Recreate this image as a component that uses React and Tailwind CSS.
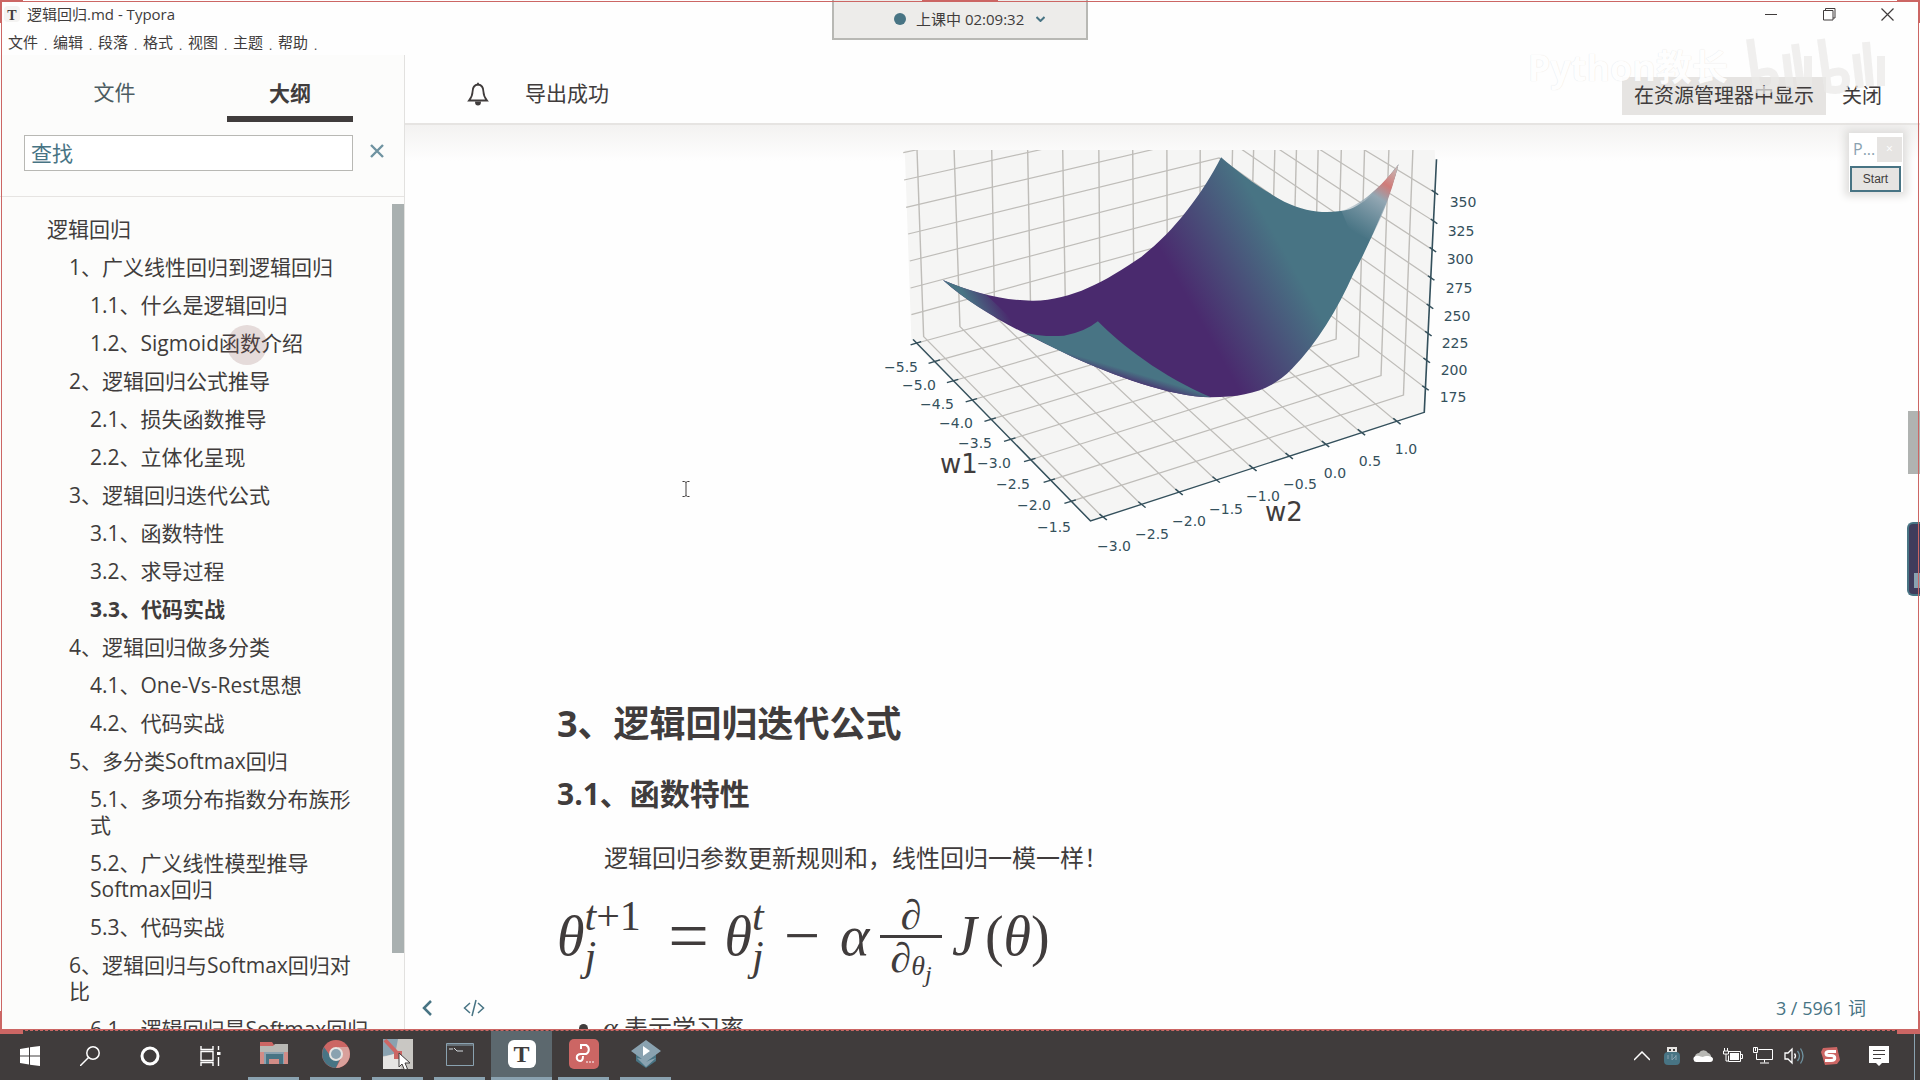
import React from "react";

const outline = [
  { level: 1, text: "逻辑回归" },
  { level: 2, text: "1、广义线性回归到逻辑回归" },
  { level: 3, text: "1.1、什么是逻辑回归" },
  { level: 3, text: "1.2、Sigmoid函数介绍", marker: true },
  { level: 2, text: "2、逻辑回归公式推导" },
  { level: 3, text: "2.1、损失函数推导" },
  { level: 3, text: "2.2、立体化呈现" },
  { level: 2, text: "3、逻辑回归迭代公式" },
  { level: 3, text: "3.1、函数特性" },
  { level: 3, text: "3.2、求导过程" },
  { level: 3, text: "3.3、代码实战", active: true },
  { level: 2, text: "4、逻辑回归做多分类" },
  { level: 3, text: "4.1、One-Vs-Rest思想" },
  { level: 3, text: "4.2、代码实战" },
  { level: 2, text: "5、多分类Softmax回归" },
  { level: 3, text: "5.1、多项分布指数分布族形式" },
  { level: 3, text: "5.2、广义线性模型推导Softmax回归" },
  { level: 3, text: "5.3、代码实战" },
  { level: 2, text: "6、逻辑回归与Softmax回归对比" },
  { level: 3, text: "6.1、逻辑回归是Softmax回归" },
];

const indent = { 1: "pl-[47px]", 2: "pl-[69px]", 3: "pl-[90px]" };

function TitleBar() {
  return (
    <header className="flex h-7 shrink-0 items-center pl-1">
      <span className="grid size-4 place-items-center rounded bg-[#f4f3f2] font-['Liberation_Serif',serif] text-sm font-bold">T</span>
      <h1 className="ml-[7px] text-[15px] leading-5">逻辑回归.md - Typora</h1>
      <div className="ml-auto flex items-center">
        <button aria-label="最小化" className="grid h-7 w-[58px] place-items-center">
          <svg width="12" height="12" stroke="#403c3c"><path d="M0 6.5h12" /></svg>
        </button>
        <button aria-label="还原" className="grid h-7 w-[58px] place-items-center">
          <svg width="13" height="13" fill="none" stroke="#403c3c"><path d="M.5 2.500h9.500v9.500h-9.500zM2.500 2.500v-2h9.500v9.500h-2" /></svg>
        </button>
        <button aria-label="关闭窗口" className="mr-1 grid h-7 w-[58px] place-items-center">
          <svg width="13" height="13" stroke="#403c3c" strokeWidth="1.2"><path d="M.5.5l12 12M12.500.5l-12 12" /></svg>
        </button>
      </div>
    </header>
  );
}

function MenuBar() {
  return (
    <nav className="flex h-[27px] shrink-0 pt-0.5 pl-2">
      {["文件", "编辑", "段落", "格式", "视图", "主题", "帮助"].map((m) => (
        <button key={m} className="flex w-[45px] items-start whitespace-nowrap text-left text-[15px] leading-6">
          {m}
          <span className="ml-1.5 pt-1 text-xs leading-6">.</span>
        </button>
      ))}
    </nav>
  );
}

function Sidebar() {
  return (
    <aside className="flex w-[405px] shrink-0 flex-col border-r border-[#e2e1df] bg-[#fcfcfb]">
      <div className="flex h-[67px] shrink-0 items-end pr-[51px] pl-[2px] text-[21px]">
        <button className="h-[49px] w-[225px] pb-3 text-center leading-8 text-[#4c5c62]">文件</button>
        <button className="h-[49px] flex-1 border-b-[6px] border-[#403c3c] pb-1 text-center font-bold leading-8">大纲</button>
      </div>
      <div className="mt-[13px] flex h-[62px] shrink-0 items-start border-b border-[#e6e4e2] pl-6">
        <input
          aria-label="查找"
          placeholder="查找"
          className="h-9 w-[329px] border border-[#b8b8b4] bg-white px-1.5 text-[21px] outline-none placeholder:text-[#487484]"
        />
        <button aria-label="清除" className="ml-4 mt-2 grid size-4 place-items-center">
          <svg width="14" height="14" stroke="#6f93a1" strokeWidth="2.4"><path d="M1 1l12 12M13 1L1 13" /></svg>
        </button>
      </div>
      <div className="flex min-h-0 flex-1 pt-[7px]">
        <ul className="min-w-0 flex-1 overflow-hidden pt-1.5">
          {outline.map((o) => (
            <li key={o.text} className={`py-1.5 pr-[22px] text-[21px] leading-[26px] ${indent[o.level]}`}>
              <a href="#outline" className={o.active ? "relative font-bold" : "relative"}>
                {o.text}
                {o.marker && <span className="absolute -top-1 right-9 size-10 rounded-full bg-[#8a5a5a]/20" />}
              </a>
            </li>
          ))}
        </ul>
        <div className="h-[749px] w-3 bg-[#a9b0b0]" />
      </div>
    </aside>
  );
}

const labels = [
  ["350", 603, 72], ["325", 601, 101], ["300", 600, 129], ["275", 599, 158], ["250", 597, 186],
  ["225", 595, 213], ["200", 594, 240], ["175", 593, 267],
  ["−5.5", 41, 237], ["−5.0", 59, 255], ["−4.5", 77, 274], ["−4.0", 96, 293], ["−3.5", 115, 313],
  ["−3.0", 134, 333], ["−2.5", 153, 354], ["−2.0", 174, 375], ["−1.5", 194, 397],
  ["−3.0", 254, 416], ["−2.5", 292, 404], ["−2.0", 329, 391], ["−1.5", 366, 379], ["−1.0", 403, 366],
  ["−0.5", 440, 354], ["0.0", 475, 343], ["0.5", 510, 331], ["1.0", 546, 319],
];

function SurfacePlot() {
  return (
    <svg viewBox="-17 1 640 440" className="mx-auto block h-[440px] w-[640px] overflow-visible" role="img" aria-label="损失函数曲面">
      <defs>
        <clipPath id="crop"><rect x="0" y="60" width="1568" height="1260" /></clipPath>
        <linearGradient id="bowl" gradientUnits="userSpaceOnUse" x1="800" y1="500" x2="1050" y2="385">
          <stop offset="0" stopColor="#4a2a6e" />
          <stop offset="1" stopColor="#487484" />
        </linearGradient>
        <linearGradient id="tip" gradientUnits="userSpaceOnUse" x1="1190" y1="290" x2="1320" y2="120">
          <stop offset="0" stopColor="#8aa2b0" stopOpacity="0" />
          <stop offset=".55" stopColor="#93a7b3" />
          <stop offset=".75" stopColor="#d07b78" />
          <stop offset="1" stopColor="#c8b4b2" />
        </linearGradient>
        <linearGradient id="left" gradientUnits="userSpaceOnUse" x1="270" y1="530" x2="340" y2="500">
          <stop offset="0" stopColor="#487484" />
          <stop offset="1" stopColor="#487484" stopOpacity="0" />
        </linearGradient>
        <linearGradient id="flap" gradientUnits="userSpaceOnUse" x1="640" y1="660" x2="610" y2="742">
          <stop offset=".6" stopColor="#487484" />
          <stop offset="1" stopColor="#4a2a6e" />
        </linearGradient>
      </defs>
      <g transform="scale(.408 .3333)" clipPath="url(#crop)" fill="none">
        <path fill="#f5f5f4" d="M108 0L880 0 880 365 126 630zM880 0L1405 0 1410 88 1383 847 880 365zM126 630L880 365 1383 847 565 1173z" />
        <g stroke="#bfbdb9" strokeWidth="3.500">
          <path d="M138 0L156 620 595 1162M229 0L245 590 690 1125M322 0L330 558 781 1087M410 0L418 527 872 1050M496 0L503 499 962 1015M585 0L588 469 1051 979M668 0L671 440 1140 943M752 0L753 411 1228 908M834 0L833 382 1315 875" />
          <path d="M1357 0L1332 795 515 1115M1298 0L1277 737 464 1052M1238 0L1222 680 416 990M1181 0L1167 627 367 929M1124 0L1113 575 319 869M1071 0L1060 525 273 811M1018 0L1008 476 227 753M966 0L957 428 182 695M914 0L908 380 138 640" />
          <path d="M126 554L880 300 1387 775M124 474L880 228 1390 692M122 393L880 156 1394 612M118 312L880 84 1398 530M113 232L880 12 1401 445M108 150L880-60 1404 360M106 68L880-132 1408 275M880-204L1410 188" />
        </g>
        <g stroke="#34505c" strokeWidth="4">
          <path d="M130 628L565 1173 1383 847 1413 88" />
          <path d="M124 645l26-10M168 700l28-10M213 758l28-10M259 816l28-10M305 874l28-10M353 934l28-10M402 995l28-10M450 1057l28-10M501 1120l28-10" />
          <path d="M587 1152l18 18M682 1115l18 18M773 1077l18 18M864 1040l18 18M954 1005l18 18M1043 969l18 18M1132 933l18 18M1220 898l18 18M1307 865l18 18" />
          <path d="M1401 180l16 14M1399 267l16 14M1396 352l16 14M1392 437l16 14M1389 522l16 14M1385 604l16 14M1381 684l16 14M1378 767l16 14" />
        </g>
        <path
          fill="url(#bowl)"
          d="M203 450C270 485 350 513 425 512C520 510 600 455 690 380C770 305 840 190 885 82C930 130 980 175 1040 215C1100 250 1150 252 1200 238C1250 215 1290 150 1320 103C1300 200 1250 340 1210 430C1170 540 1120 640 1060 715C1010 780 950 802 860 802C760 800 620 735 520 680C400 610 290 545 203 450z"
        />
        <path fill="url(#left)" d="M203 450Q250 475 310 495L400 600Q290 545 203 450z" />
        <path fill="url(#tip)" d="M1180 243C1240 220 1290 150 1320 103C1300 200 1275 275 1250 330L1200 300z" />
        <path fill="url(#flap)" d="M405 608Q450 622 500 617Q550 607 583 574C640 645 740 740 860 802C760 800 620 735 520 680Q450 640 405 608z" />
      </g>
      <g fill="#34505c" textAnchor="middle" fontFamily="DejaVu Sans, sans-serif" fontSize="14">
        {labels.map(([t, x, y], i) => <text key={i} x={x} y={y + 5}>{t}</text>)}
      </g>
      <g fill="#403c3c" textAnchor="middle" fontFamily="DejaVu Sans, sans-serif" fontSize="26">
        <text x="99" y="343">w1</text>
        <text x="424" y="391">w2</text>
      </g>
    </svg>
  );
}

function Formula() {
  return (
    <div className="mt-3 flex h-24 items-center font-['Liberation_Serif',serif] text-[56px] leading-none italic">
      <span>θ</span>
      <span className="flex w-[66px] flex-col text-[42px] leading-10">
        <span className="whitespace-nowrap">t<span className="not-italic">+1</span></span>
        <span>j</span>
      </span>
      <span className="ml-4 w-11 text-center text-[72px] not-italic">=</span>
      <span className="ml-3.5">θ</span>
      <span className="flex w-5 flex-col text-[42px] leading-10">
        <span>t</span>
        <span>j</span>
      </span>
      <span className="ml-3 w-9 text-center text-[64px] not-italic">−</span>
      <span className="ml-5 w-8">α</span>
      <span className="ml-2 flex w-[62px] flex-col pt-2 text-center text-[42px] leading-10">
        <span className="border-b-[3px] border-[#403c3c]">∂</span>
        <span className="flex items-start justify-center whitespace-nowrap">
          ∂<span className="pt-3.5 text-[28px] leading-none">θ</span><span className="pt-6 text-[24px] leading-none">j</span>
        </span>
      </span>
      <span className="ml-2.5 whitespace-nowrap">J<span className="ml-2 not-italic">(</span>θ<span className="not-italic">)</span></span>
    </div>
  );
}

function Editor() {
  return (
    <main className="relative flex min-w-0 flex-1 flex-col overflow-hidden">
      <div className="flex h-[70px] shrink-0 items-center border-b-2 border-[#e6e4e2] pt-2.5 pr-[38px] pl-[62px] text-[21px]">
        <svg width="22" height="24" viewBox="0 0 22 24" fill="none" stroke="#403c3c" strokeWidth="1.800">
          <path d="M11 2.500C6.500 3 5.500 6.500 5.500 10c0 4-1.500 6-3.500 8.500h18c-2-2.500-3.500-4.500-3.500-8.500 0-3.500-1-7-5.500-7.500zM11 .8v2" />
          <path d="M9 20.500a2 2 0 0 0 4 0z" fill="#403c3c" />
        </svg>
        <p className="ml-9">导出成功</p>
        <button className="mt-1 ml-auto h-[38px] bg-[#e6e4e2] px-3 text-[20px]">在资源管理器中显示</button>
        <button className="mt-1 ml-4 text-[20px]">关闭</button>
      </div>
      <div className="min-h-0 flex-1 overflow-hidden bg-[linear-gradient(#f3f2f1,#fefefe_36px)] px-[152px] pt-1.5">
        <SurfacePlot />
        <h2 className="mt-[129px] text-[36px] leading-[48px] font-bold">3、逻辑回归迭代公式</h2>
        <h3 className="mt-[26px] text-[30px] leading-10 font-bold">3.1、函数特性</h3>
        <p className="mt-[26px] pl-[47px] text-[24px] leading-9">逻辑回归参数更新规则和，线性回归一模一样！</p>
        <Formula />
        <ul className="mt-[26px] list-disc pl-[46px] text-[24px] leading-9">
          <li><span className="font-['Liberation_Serif',serif] text-[28px] leading-none italic">α</span> 表示学习率</li>
        </ul>
      </div>
      <footer className="absolute inset-x-0 bottom-0 flex h-11 items-center pr-[54px] pl-4 text-[18px] text-[#487484]">
        <button aria-label="隐藏侧边栏">
          <svg width="14" height="18" fill="none" stroke="#487484" strokeWidth="2.500"><path d="M10 2L3 9l7 7" /></svg>
        </button>
        <button aria-label="源代码模式" className="ml-7">
          <svg width="22" height="18" fill="none" stroke="#487484" strokeWidth="1.500"><path d="M7 4L1.500 9 7 14M15 4l5.500 5L15 14M13 1L9 17" /></svg>
        </button>
        <span className="ml-auto">3 / 5961 词</span>
      </footer>
    </main>
  );
}

const pinned = [
  { name: "文件资源管理器", icon: (
    <svg width="28" height="24" viewBox="0 0 28 24"><path fill="#cc6664" d="M0 0h12l2 3v8H0z" /><path fill="#b8b8b4" d="M3 4h10l2-2h13v20H0V4z" /><path fill="#d28c86" d="M0 10h28v12H0z" /><path fill="#8aa2b0" d="M4 10h20v12h-3v-7H8v7H4z" /><path fill="#487484" d="M6 12h17v10h-4v-5H9v5H6z" /></svg>
  ) },
  { name: "Chrome", icon: (
    <svg width="28" height="28" viewBox="0 0 28 28"><circle cx="14" cy="14" r="14" fill="#cc6664" /><path fill="#487484" d="M2 7a14 14 0 0 0 12 21l4-9-9-2z" /><path fill="#d9a09b" d="M14 28a14 14 0 0 0 12-21H16l4 10z" /><circle cx="14" cy="14" r="7" fill="#e6e4e2" /><circle cx="14" cy="14" r="5" fill="#8aa2b0" /></svg>
  ) },
  { name: "地图", icon: (
    <svg width="30" height="30" viewBox="0 0 30 30" className="overflow-visible"><path fill="#c9c7c3" d="M0 0h30v30H0z" /><path fill="#8aa2b0" d="M0 0h15l-3 16L0 17z" /><path fill="#e6e4e2" d="M0 18l14-4 4 16H0z" /><path stroke="#cc6664" strokeWidth="4" d="M2 1l13 14" /><path fill="#cc6664" d="M11 12h8v8h-8z" /><path fill="#fff" stroke="#403c3c" d="M16 14v14l3-3 2.500 6 3-1-2.500-6h5z" /></svg>
  ) },
  { name: "命令提示符", icon: (
    <svg width="28" height="23" fill="none" stroke="#8aa2b0"><path d="M.5.5h27v22H.5zM0 2h28" /><path stroke="#d5dade" d="M3 6h4M8 5l3 3h6" /></svg>
  ) },
  { name: "Typora", active: true, icon: (
    <span className="grid size-7 place-items-center rounded-md bg-white font-['Liberation_Serif',serif] text-[24px] leading-none font-bold text-[#403c3c]">T</span>
  ) },
  { name: "PDF", icon: (
    <svg width="30" height="30" fill="none" stroke="#fff" strokeWidth="2"><rect width="30" height="30" rx="5" fill="#cc6664" stroke="none" /><path d="M12 10V6h5a5 5 0 0 1 0 9h-5c-6 0-5 7-1 7 3 0 3-3 3-5" /><path strokeWidth="1" strokeDasharray="2 1" d="M17 23h8" /></svg>
  ) },
  { name: "播放器", icon: (
    <svg width="30" height="28" viewBox="0 0 30 28"><path fill="#487484" d="M5 13v8l10 7 10-7v-8z" /><path fill="#8aa2b0" d="M15 0L30 11 15 22 0 11zM6 18l5 1 4 3 4-2 6-2-10 9z" /><path fill="#fff" d="M12 6l7 5-7 5z" /></svg>
  ) },
];

function Taskbar() {
  const sys = "grid w-[60px] place-items-center";
  return (
    <footer className="flex h-[50px] shrink-0 items-stretch border-t border-dashed border-[#cc6664] bg-[#403c3c]">
      <button aria-label="开始" className={sys}><svg width="20" height="20" fill="#fff"><path d="M0 3l9-1.500V9.500H0zM10 1.300L20 0v9.500H10zM0 10.500h9v8L0 17zM10 10.500h10V20l-10-1.300z" /></svg></button>
      <button aria-label="搜索" className={sys}><svg width="20" height="20" fill="none" stroke="#fff" strokeWidth="1.500"><circle cx="13" cy="7" r="6.200" /><path d="M8.500 11.500L0 20" /></svg></button>
      <button aria-label="Cortana" className={sys}><svg width="20" height="20" fill="none" stroke="#fff" strokeWidth="3"><circle cx="10" cy="10" r="8" /></svg></button>
      <button aria-label="任务视图" className={sys}><svg width="21" height="20" fill="none" stroke="#fff" strokeWidth="1.400"><path d="M1 0v3.500h12V0M1 5.500h12v9H1zM1 20v-3.500h12V20M18.500 0v4M18.500 11v9" /><path fill="#fff" stroke="none" d="M17 6h3.500v3H17z" /></svg></button>
      <div className="ml-[3px] flex gap-px">
        {pinned.map((p) => (
          <button key={p.name} aria-label={p.name} className={p.active ? "flex w-[61px] flex-col items-center bg-[#5c686e]" : "flex w-[61px] flex-col items-center"}>
            <span className="grid flex-1 place-items-center">{p.icon}</span>
            <span className={p.active ? "h-[3px] w-full bg-[#8aa2b0]" : "h-[3px] w-[51px] bg-[#8aa2b0]"} />
          </button>
        ))}
      </div>
      <div className="ml-auto flex items-center">
        <button aria-label="显示隐藏的图标" className="grid w-[30px] place-items-center"><svg width="16" height="10" fill="none" stroke="#fff" strokeWidth="1.500"><path d="M0 9l8-8 8 8" /></svg></button>
        <button aria-label="USB" className="grid w-[30px] place-items-center"><svg width="18" height="18"><path fill="#e6e4e2" d="M4 0h10v5H4z" /><path fill="#403c3c" d="M6 2h2v2H6zM10 2h2v2h-2z" /><rect x="1" y="5" width="16" height="13" rx="4" fill="#487484" /><path stroke="#8aa2b0" fill="none" d="M5 8v4M9 7v6l4-4M13 8v5" /></svg></button>
        <button aria-label="OneDrive" className="grid w-[31px] place-items-center"><svg width="20" height="14"><path fill="#b8b8b4" d="M2 9a4 4 0 0 1 4-5 5 5 0 0 1 9 0 4 4 0 0 1 3 4L8 9z" /><path fill="#fff" d="M4 13a3 3 0 0 1-1-6c3-1 5 1 7 1 3-2 10-1 10 2 0 2-1 3-3 3z" /></svg></button>
        <button aria-label="电池" className="grid w-[30px] place-items-center"><svg width="20" height="16" fill="none" stroke="#fff"><path d="M5.500 3.500h12v10h-12v-6M17.500 6.500h2v4h-2M1.500 0v3M4.500 0v3M.5 3h5v3h-5zM3 6v7h2" /><path fill="#fff" stroke="none" d="M7 5h9v7H7z" /></svg></button>
        <button aria-label="网络" className="grid w-[30px] place-items-center"><svg width="20" height="17" fill="none" stroke="#fff"><path d="M5.500 2.500h14v10h-16v-6M11.500 12.500v3M7 16h9M.5.5h4v5h-4zM2.500 1v3" /></svg></button>
        <button aria-label="音量" className="grid w-[31px] place-items-center"><svg width="20" height="18" fill="none" stroke="#fff" strokeWidth="1.300"><path d="M1 6h3l4-4v14l-4-4H1zM10.500 6.500q2 2.500 0 5" /><path stroke="#6f93a1" d="M13.500 4q4 5 0 10M16.500 1.500q5 7.500 0 15" /></svg></button>
        <button aria-label="搜狗输入法" className="ml-[7px] grid w-[28px] place-items-center"><svg width="19" height="18" fill="none"><path fill="#cc6664" d="M2 1l14-1 3 13-3 4-12 1-4-13z" /><path stroke="#fff" strokeWidth="3" d="M15 4.500H8c-4 0-4 4 0 4h2c5 0 5 5 0 5H4" /></svg></button>
        <button aria-label="通知" className="ml-[25px] grid w-[20px] place-items-center"><svg width="20" height="20"><path fill="#fff" d="M0 0h20v17h-7l-3 3-3-3H0z" /><path stroke="#403c3c" d="M4 4.500h12M4 8.500h12M4 12.500h8" /></svg></button>
        <span className="ml-[25px] h-[49px] w-1.5 border-l border-[#8aa2b0]" />
      </div>
    </footer>
  );
}

function Watermark() {
  return (
    <div className="pointer-events-none absolute top-9 right-[34px] flex items-start gap-4 opacity-90">
      <span className="mt-3 text-[36px] leading-10 font-bold text-white [text-shadow:0_0_1px_#dddbd9]">Python教长</span>
      <svg width="142" height="64" fill="none" stroke="#ebeae8" strokeWidth="8">
        <path d="M6 3l7 50q18 4 18-9t-18-6M42 18l4 34M51 8l6 42M64 20v30M77 3l7 50q18 4 18-9t-18-6M112 18l4 34M122 6l4 44M137 20v30" opacity=".8" />
      </svg>
    </div>
  );
}

function ScreenFrame() {
  return (
    <div className="pointer-events-none absolute inset-x-0 top-0 bottom-[49px]">
      <div className="absolute inset-px border border-[#cc6664]" />
      <div className="absolute top-0 left-0 h-[23px] w-[23px] border-t-2 border-l-2 border-[#cc6664]" />
      <div className="absolute top-0 right-0 h-[23px] w-[23px] border-t-2 border-r-2 border-[#cc6664]" />
      <div className="absolute bottom-[-3px] left-0 h-[23px] w-[23px] border-b-4 border-l-2 border-[#cc6664]" />
      <div className="absolute right-0 bottom-[-3px] h-[23px] w-[23px] border-r-2 border-b-4 border-[#cc6664]" />
      <div className="absolute top-0 left-1/2 h-0.5 w-[76px] -translate-x-1/2 bg-[#cc6664]" />
    </div>
  );
}

export default function App() {
  return (
    <div className="relative flex h-screen flex-col overflow-hidden bg-[#fefefe] font-['Open_Sans','Noto_Sans_CJK_SC',sans-serif] text-[#403c3c]">
      <TitleBar />
      <MenuBar />
      <div className="flex min-h-0 flex-1">
        <Sidebar />
        <Editor />
      </div>
      <Taskbar />

      <button className="absolute top-0 left-1/2 flex h-10 w-64 -translate-x-1/2 items-center border-2 border-t-0 border-[#b8b8b4] bg-[#edecea] pl-[60px] text-[15px]">
        <span className="size-3 rounded-full bg-[#487484]" />
        <span className="ml-2.5">上课中 02:09:32</span>
        <svg className="ml-3" width="9" height="6" fill="none" stroke="#487484" strokeWidth="2"><path d="M.5 1l4 4 4-4" /></svg>
      </button>

      <Watermark />

      <section className="absolute top-[133px] right-[17px] w-[54px] bg-white shadow-[0_0_8px_4px_#dedddb]">
        <div className="flex h-8 items-center justify-between pr-px pl-1 text-base text-[#8aa2b0]">
          P...
          <button aria-label="关闭计时器" className="grid size-[25px] place-items-center bg-[#e6e4e2] text-xs text-white">×</button>
        </div>
        <button className="mx-px h-[26px] w-[51px] border-2 border-[#487484] bg-[#e6e4e2] font-['Liberation_Sans',sans-serif] text-xs text-[#403c3c]">Start</button>
      </section>

      <div className="absolute top-[411px] right-0 h-[63px] w-3 bg-[#b0b3b1]" />
      <div className="absolute top-[522px] right-0 flex h-[74px] w-[13px] items-end justify-end rounded-l-md border-2 border-r-0 border-[#487484] bg-[#403c5c] pb-1.5">
        <span className="h-[15px] w-1.5 bg-[#8aa2b0]" />
      </div>

      <svg className="absolute top-[481px] left-[682px]" width="8" height="16" fill="none" stroke="#403c3c"><path d="M.5.5h2l1.500 1 1.500-1h2M4 1.500v13M.5 15.500h2l1.500-1 1.500 1h2" /></svg>

      <ScreenFrame />
    </div>
  );
}
